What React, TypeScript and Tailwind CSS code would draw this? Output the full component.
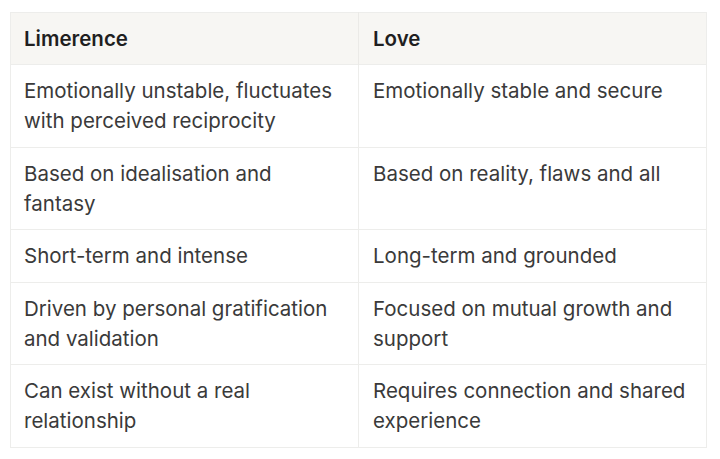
const rows: [string, string][] = [
  ["Emotionally unstable, fluctuates with perceived reciprocity", "Emotionally stable and secure"],
  ["Based on idealisation and fantasy", "Based on reality, flaws and all"],
  ["Short-term and intense", "Long-term and grounded"],
  ["Driven by personal gratification and validation", "Focused on mutual growth and support"],
  ["Can exist without a real relationship", "Requires connection and shared experience"],
]

export default function App() {
  return (
    <div className="w-[720px] h-[459px] bg-white pt-[12px] pl-[10px]" style={{ fontFamily: "Inter, 'Noto Sans', sans-serif" }}>
      <table className="w-[697px] table-fixed border-collapse border border-[#ededeb] text-[20.5px] leading-[30px]">
        <colgroup>
          <col className="w-[348px]" />
          <col />
        </colgroup>
        <thead>
          <tr className="bg-[#f7f6f3] h-[52px]">
            <th className="text-left font-semibold text-[#1f1f1f] pl-[13px] pr-[12px] pt-[11px] pb-[10px] border-r border-[#ebeae7]">Limerence</th>
            <th className="text-left font-semibold text-[#1f1f1f] pl-[14px] pr-[12px] pt-[11px] pb-[10px]">Love</th>
          </tr>
        </thead>
        <tbody>
          {rows.map(([a, b], i) => (
            <tr key={i} className="border-t border-[#ededeb]">
              <td className="align-top pl-[13px] pr-[12px] pt-[11px] pb-[10.5px] text-[#3a3a3a] border-r border-[#ededeb]">{a}</td>
              <td className="align-top pl-[14px] pr-[12px] pt-[11px] pb-[10.5px] text-[#3a3a3a]">{b}</td>
            </tr>
          ))}
        </tbody>
      </table>
    </div>
  )
}
